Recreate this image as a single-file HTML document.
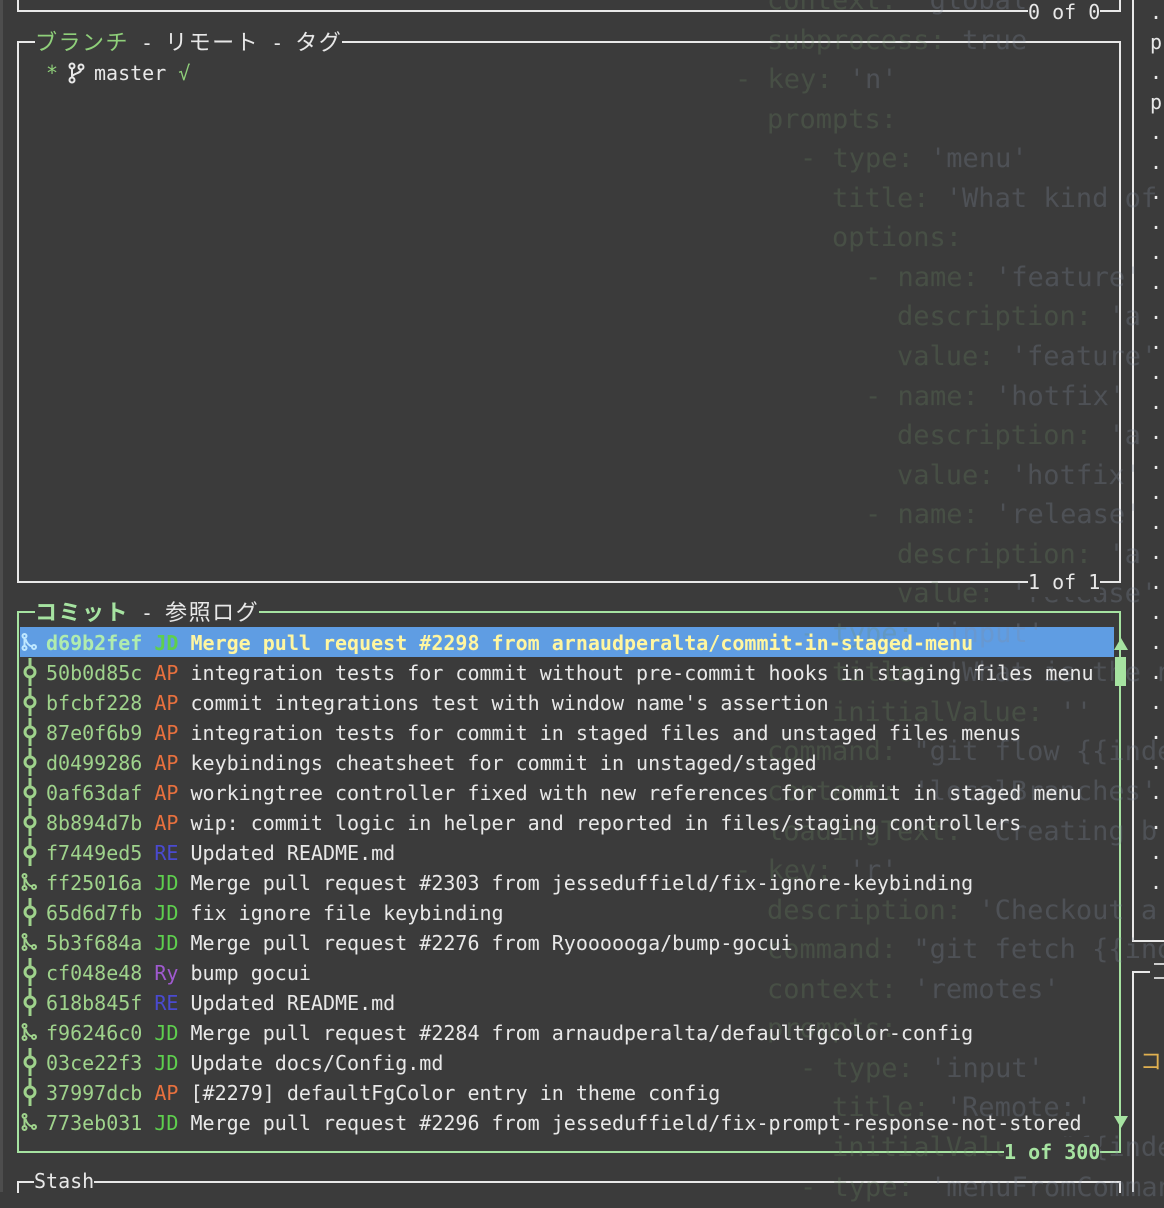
<!DOCTYPE html>
<html><head><meta charset="utf-8">
<style>
html,body{margin:0;padding:0}
body{width:1164px;height:1192px;background:#3b3b3b;position:relative;overflow:hidden;font-family:"DejaVu Sans Mono","Noto Sans CJK JP",monospace;font-size:20px;color:#e8e8e8}
.l{position:absolute;white-space:pre;line-height:30px;height:30px}
.h{position:absolute;height:2px}
.v{position:absolute;width:2px}
.w{background:#e8e8e8}
.g{background:#a6e3a1}
.fade{position:absolute;left:0;top:0;font-size:27px;z-index:1;white-space:pre}
.fade div{position:absolute;line-height:40px;height:40px}
.k{color:rgba(110,140,100,0.26)}
.s{color:rgba(130,140,160,0.27)}
.fg{z-index:2}
.hash{color:#9fd38c}
.AP{color:#e8703e}.JD{color:#5ecf4e}.RE{color:#4a4ad0}.Ry{color:#a05ad0}
svg{position:absolute;z-index:2}
.lab{position:absolute;background:#3b3b3b;padding:0;line-height:30px;height:30px;white-space:pre;z-index:3}
.cj{font-family:"Noto Sans CJK JP",sans-serif;font-size:22px;letter-spacing:1.5px}
</style></head><body>
<div style="position:absolute;left:0;top:0;width:3px;height:1192px;background:#4d4d4d"></div>

<div class="v w" style="left:17px;top:0;height:12px"></div>
<div class="v w" style="left:1119px;top:0;height:12px"></div>
<div class="h w" style="left:17px;top:10px;width:1104px"></div>
<div class="lab" style="left:1028px;top:-3px">0 of 0</div>

<div class="h w" style="left:17px;top:41px;width:1104px"></div>
<div class="v w" style="left:17px;top:41px;height:542px"></div>
<div class="v w" style="left:1119px;top:41px;height:542px"></div>
<div class="h w" style="left:17px;top:581px;width:1104px"></div>
<div class="lab" style="left:35px;top:26px"><span class="cj" style="color:#8fd07a">ブランチ</span> - <span class="cj">リモート</span> - <span class="cj">タグ</span></div>
<div class="lab" style="left:1028px;top:567px">1 of 1</div>
<div class="l fg" style="left:46px;top:58px"><span style="color:#8fd07a">*</span></div>
<svg style="left:68px;top:62px" width="18" height="22" viewBox="0 0 18 22"><g fill="none" stroke="#e8e8e8" stroke-width="2"><circle cx="4" cy="4" r="2.5"/><circle cx="4" cy="18" r="2.5"/><circle cx="13" cy="5" r="2.5"/><path d="M4 6.5V15.5M13 7.5C13 12 4 11 4 15.5"/></g></svg>
<div class="l fg" style="left:94px;top:58px">master <span style="color:#8fd07a">√</span></div>

<div class="h g" style="left:17px;top:611px;width:1104px"></div>
<div class="v g" style="left:17px;top:611px;height:542px"></div>
<div class="v g" style="left:1119px;top:611px;height:542px"></div>
<div class="h g" style="left:17px;top:1151px;width:1104px"></div>
<div class="lab" style="left:35px;top:596px"><b class="cj" style="color:#a6e3a1">コミット</b> - <span class="cj">参照ログ</span></div>
<div class="lab" style="left:1004px;top:1137px;color:#a6e3a1;font-weight:bold">1 of 300</div>
<div style="position:absolute;left:20px;top:627px;width:1094px;height:30px;background:#5f9de3"></div>
<div style="position:absolute;left:1114px;top:638px;width:0;height:0;border-left:7px solid transparent;border-right:7px solid transparent;border-bottom:12px solid #a6e3a1;z-index:2"></div>
<div style="position:absolute;left:1115px;top:657px;width:11px;height:29px;background:#a6e3a1;z-index:2"></div>
<div style="position:absolute;left:1114px;top:1116px;width:0;height:0;border-left:7px solid transparent;border-right:7px solid transparent;border-top:12px solid #a6e3a1;z-index:2"></div>

<div id="rows"></div>

<div class="h w" style="left:17px;top:1181px;width:1104px"></div>
<div class="v w" style="left:17px;top:1181px;height:12px"></div>
<div class="v w" style="left:1119px;top:1181px;height:12px"></div>
<div class="lab" style="left:34px;top:1166px">Stash</div>

<div class="v w" style="left:1132px;top:0;height:942px"></div>
<div class="h w" style="left:1132px;top:940px;width:40px"></div>
<div class="v w" style="left:1132px;top:971px;height:221px"></div>
<div class="h w" style="left:1132px;top:971px;width:18px"></div>
<div class="h" style="left:1154px;top:963px;width:12px;background:#ccc"></div>
<div class="h" style="left:1154px;top:977px;width:12px;background:#ccc"></div>
<div class="l fg cj" style="left:1140px;top:1045px;color:#e0b050">コ</div>
<div id="rc"></div>

<div class="fade" id="fade"></div>

<script>
var rows=[
['m','d69b2fef','JD','Merge pull request #2298 from arnaudperalta/commit-in-staged-menu'],
['c','50b0d85c','AP','integration tests for commit without pre-commit hooks in staging files menu'],
['c','bfcbf228','AP',"commit integrations test with window name's assertion"],
['c','87e0f6b9','AP','integration tests for commit in staged files and unstaged files menus'],
['c','d0499286','AP','keybindings cheatsheet for commit in unstaged/staged'],
['c','0af63daf','AP','workingtree controller fixed with new references for commit in staged menu'],
['c','8b894d7b','AP','wip: commit logic in helper and reported in files/staging controllers'],
['c','f7449ed5','RE','Updated README.md'],
['m','ff25016a','JD','Merge pull request #2303 from jesseduffield/fix-ignore-keybinding'],
['c','65d6d7fb','JD','fix ignore file keybinding'],
['m','5b3f684a','JD','Merge pull request #2276 from Ryoooooga/bump-gocui'],
['c','cf048e48','Ry','bump gocui'],
['c','618b845f','RE','Updated README.md'],
['m','f96246c0','JD','Merge pull request #2284 from arnaudperalta/defaultfgcolor-config'],
['c','03ce22f3','JD','Update docs/Config.md'],
['c','37997dcb','AP','[#2279] defaultFgColor entry in theme config'],
['m','773eb031','JD','Merge pull request #2296 from jesseduffield/fix-prompt-response-not-stored']];
var h='';
rows.forEach(function(r,i){
 var t=627+30*i, sel=i==0;
 var col=sel?'#a6e3a1':'#9fd38c';
 if(r[0]=='c'){
  h+='<svg style="left:20px;top:'+t+'px" width="20" height="30"><g stroke="'+col+'" stroke-width="3" fill="none"><path d="M10 1V9M10 21V29"/><circle cx="10" cy="15" r="5"/></g></svg>';
 } else {
  h+='<svg style="left:20px;top:'+t+'px" width="20" height="30"><g stroke="'+(sel?'#bfe8ff':col)+'" stroke-width="2" fill="none"><circle cx="4.5" cy="9" r="2"/><circle cx="4.5" cy="21" r="2"/><circle cx="14" cy="20" r="2"/><path d="M4.5 11V19M5.5 12C7 17 10 19 12 19.5"/></g></svg>';
 }
 var mc=sel?'color:#fff6a0;font-weight:bold':'';
 h+='<div class="l fg" style="left:46px;top:'+(t+1)+'px'+(sel?';font-weight:bold':'')+'"><span class="hash" style="'+(sel?'color:#b0ecae':'')+'">'+r[1]+'</span> <span class="'+r[2]+'">'+r[2]+'</span> <span style="'+mc+'">'+r[3]+'</span></div>';
});
document.getElementById('rows').innerHTML=h;
var rc='';var dots=['.','p','.','p'];
for(var i=0;i<30;i++){var y=-3+30*i;rc+='<div class="l fg" style="left:1150px;top:'+y+'px">'+(i<4?dots[i]:'.')+'</div>';}
document.getElementById('rc').innerHTML=rc;
var F=[
[767,"context: ","'global'"],[767,"subprocess: ","true"],[735,"- key: ","'n'"],[767,"prompts:",""],
[800,"- type: ","'menu'"],[832,"title: ","'What kind of"],[832,"options:",""],[865,"- name: ","'feature'"],
[897,"description: ","'a"],[897,"value: ","'feature'"],[865,"- name: ","'hotfix'"],[897,"description: ","'a"],
[897,"value: ","'hotfix'"],[865,"- name: ","'release'"],[897,"description: ","'a"],[897,"value: ","'release'"],
[800,"- type: ","'input'"],[832,"title: ","'What is the n"],[832,"initialValue: ","''"],[767,"command: ","\"git flow {{index"],
[767,"context: ","'localBranches'"],[767,"loadingText: ","'Creating b"],[735,"- key: ","'r'"],[767,"description: ","'Checkout a"],
[767,"command: ","\"git fetch {{ind"],[767,"context: ","'remotes'"],[767,"prompts:",""],[800,"- type: ","'input'"],
[832,"title: ","'Remote:'"],[832,"initialValue: ","\"{{index"],[800,"- type: ","'menuFromCommand'"]];
var fh='';
F.forEach(function(f,i){var y=-19+39.55*i;fh+='<div style="left:'+f[0]+'px;top:'+y+'px"><span class="k">'+f[1]+'</span><span class="s">'+f[2]+'</span></div>';});
document.getElementById('fade').innerHTML=fh;
</script>
</body></html>
